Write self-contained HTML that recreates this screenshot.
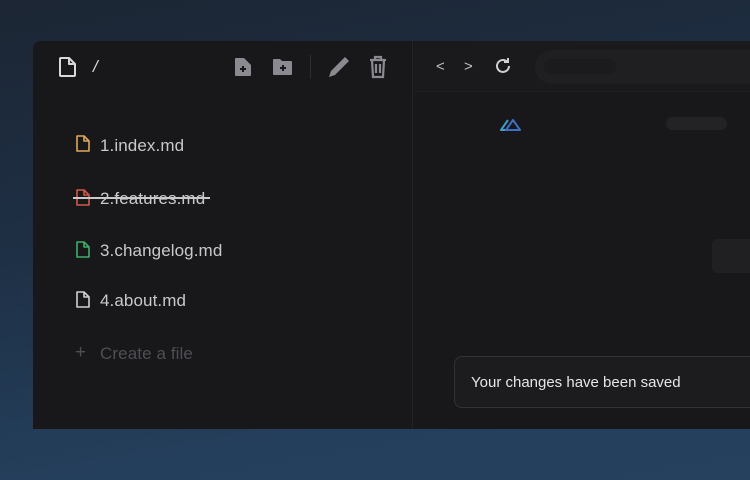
<!DOCTYPE html>
<html><head><style>
*{margin:0;padding:0;box-sizing:border-box}
body{width:750px;height:480px;overflow:hidden;position:relative;font-family:"Liberation Sans",sans-serif;
background:linear-gradient(170deg,#1c2634 0%,#1e2f44 40%,#243f5c 80%,#25415d 100%);}
.win{position:absolute;left:33px;top:41px;width:730px;height:388px;background:#18181b;border-radius:8px 0 0 0;overflow:hidden}
.left{position:absolute;left:0;top:0;width:380px;height:388px;background:#18181b;border-right:1px solid #232326}
.rtop{position:absolute;left:381px;top:0;right:0;height:51px;background:#1a1a1d;border-bottom:1px solid #202023}
.item{position:absolute;left:67px;font-size:17px;color:#c9c9cc;letter-spacing:0.1px}
.ico{position:absolute}
.url{position:absolute;left:535px;top:50px;width:230px;height:34px;background:#1f1f22;border-radius:17px}
.pill{position:absolute;background:#232326;border-radius:6px}
.toast{position:absolute;left:454px;top:356px;width:310px;height:52px;background:#1c1c1f;border:1px solid #333337;border-radius:8px;color:#e6e6e8;font-size:15px;padding:17px 0 0 16px}
</style></head><body>
<div class="win">
 <div class="left"></div>
 <div class="rtop"></div>
</div>
<svg class="ico" style="left:58px;top:56px" width="20" height="22" viewBox="0 0 20 22" fill="none" stroke="#d8d8da" stroke-width="2" stroke-linejoin="round"><path d="M3 2h8l6 6v11a1 1 0 0 1-1 1H3a1 1 0 0 1-1-1V3a1 1 0 0 1 1-1z"/><path d="M11 2v6h6"/></svg>
<div style="position:absolute;left:93px;top:57px;color:#d8d8da;font-size:17px;font-style:italic">/</div>
<svg class="ico" style="left:233px;top:56px" width="20" height="22" viewBox="0 0 20 22"><path d="M2 3a1 1 0 0 1 1-1h8l7 7v10a1 1 0 0 1-1 1H3a1 1 0 0 1-1-1z" fill="#8a8a90"/><path d="M10 10v6M7 13h6" stroke="#18181b" stroke-width="2"/></svg>
<svg class="ico" style="left:272px;top:57px" width="22" height="20" viewBox="0 0 22 20"><path d="M1 3a1 1 0 0 1 1-1h6l2 2h9a1 1 0 0 1 1 1v12a1 1 0 0 1-1 1H2a1 1 0 0 1-1-1z" fill="#8a8a90"/><path d="M11 8v6M8 11h6" stroke="#18181b" stroke-width="2"/></svg>
<div style="position:absolute;left:310px;top:55px;width:1px;height:24px;background:#2c2c30"></div>
<svg class="ico" style="left:327px;top:55px" width="24" height="24" viewBox="0 0 24 24"><path d="M18 2l4 4L8 20l-6 2 2-6z" fill="#8a8a90"/></svg>
<svg class="ico" style="left:368px;top:55px" width="20" height="24" viewBox="0 0 20 24" fill="none" stroke="#8a8a90" stroke-width="2.2"><path d="M2 5h16M7 5V2h6v3"/><path d="M4 5l1 17h10l1-17" fill="none"/><path d="M8 9v9M12 9v9"/></svg>
<svg class="ico" style="left:76px;top:135px" width="14" height="17" viewBox="0 0 14 17" fill="none" stroke="#e0a85a" stroke-width="1.6" stroke-linejoin="round"><path d="M1 1h7l5 5v10H1z"/><path d="M8 1v5h5"/></svg>
<div class="item" style="top:136px;left:100px">1.index.md</div>
<svg class="ico" style="left:76px;top:189px" width="14" height="17" viewBox="0 0 14 17" fill="none" stroke="#d2584a" stroke-width="1.6" stroke-linejoin="round"><path d="M1 1h7l5 5v10H1z"/><path d="M8 1v5h5"/></svg>
<div class="item" style="top:189px;left:100px">2.features.md</div>
<div style="position:absolute;left:73px;top:197px;width:137px;height:1.5px;background:#c9c9cc"></div>
<svg class="ico" style="left:76px;top:241px" width="14" height="17" viewBox="0 0 14 17" fill="none" stroke="#3fae6a" stroke-width="1.6" stroke-linejoin="round"><path d="M1 1h7l5 5v10H1z"/><path d="M8 1v5h5"/></svg>
<div class="item" style="top:241px;left:100px">3.changelog.md</div>
<svg class="ico" style="left:76px;top:291px" width="14" height="17" viewBox="0 0 14 17" fill="none" stroke="#d0d0d3" stroke-width="1.6" stroke-linejoin="round"><path d="M1 1h7l5 5v10H1z"/><path d="M8 1v5h5"/></svg>
<div class="item" style="top:291px;left:100px">4.about.md</div>
<div style="position:absolute;left:75px;top:342px;color:#4e4e53;font-size:19px">+</div>
<div class="item" style="top:344px;left:100px;color:#4e4e53">Create a file</div>
<div style="position:absolute;left:436px;top:58px;color:#c0c0c4;font-size:15px">&lt;</div>
<div style="position:absolute;left:464px;top:58px;color:#c0c0c4;font-size:15px">&gt;</div>
<svg class="ico" style="left:494px;top:57px" width="18" height="18" viewBox="0 0 18 18" fill="none" stroke="#d0d0d3" stroke-width="2"><path d="M15 9a6 6 0 1 1-2-4.5"/><path d="M14 1v4h-4"/></svg>
<div class="url"></div>
<div class="pill" style="left:544px;top:59px;width:72px;height:15px;background:#1b1b1e;border-radius:8px"></div>
<svg class="ico" style="left:499px;top:116px" width="24" height="16" viewBox="0 0 24 16" fill="none" stroke-width="2" stroke-linejoin="round"><path d="M9 4L2 14h8" stroke="#3aa0c8"/><path d="M7 14l7-10 7 10z" stroke="#3f6fc0"/></svg>
<div class="pill" style="left:666px;top:117px;width:61px;height:13px;border-radius:7px"></div>
<div class="pill" style="left:712px;top:239px;width:60px;height:34px;background:#202023"></div>
<div class="toast">Your changes have been saved</div>
</body></html>
